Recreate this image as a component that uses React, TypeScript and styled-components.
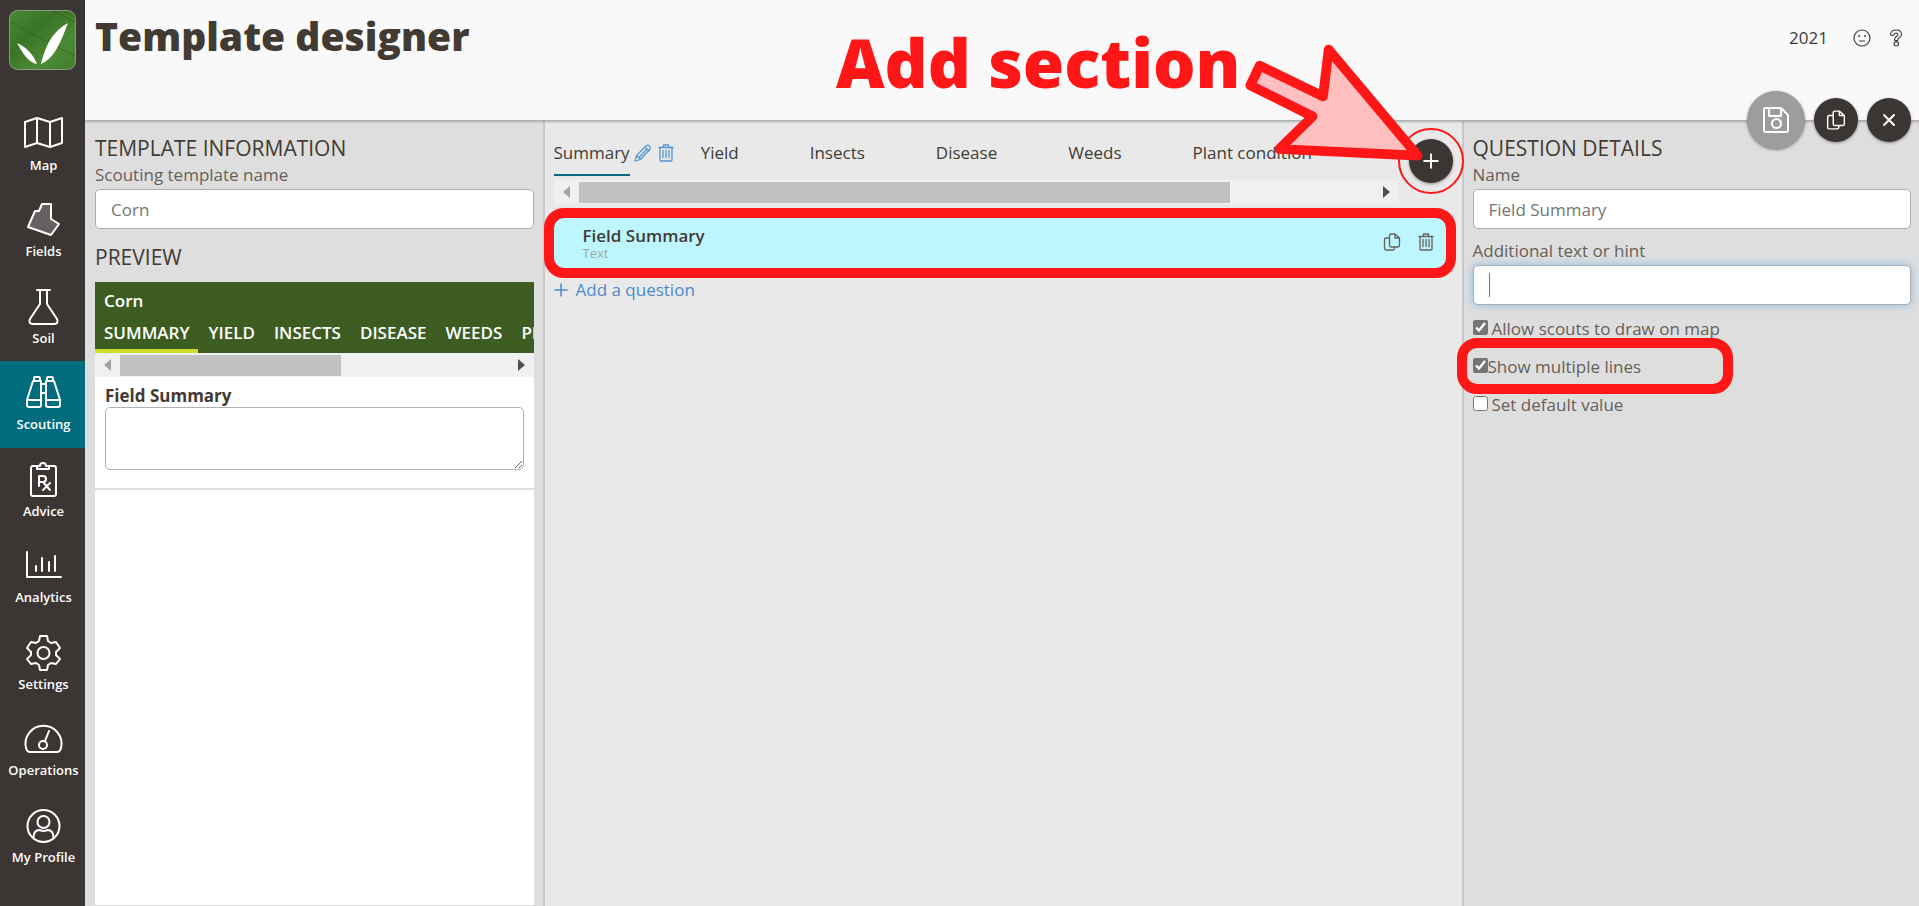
import React, { useId } from "react";
import styled, { createGlobalStyle, css } from "styled-components";

const GlobalStyle = createGlobalStyle`
  *, *::before, *::after { box-sizing: border-box; }
  body {
    margin: 0;
    font-family: "Open Sans", sans-serif;
    font-size: 17px;
    line-height: 24px;
    color: #413b34;
    background: #dedede;
  }
  button, input, textarea { font: inherit; color: inherit; }
  button { padding: 0; border: 0; background: none; cursor: pointer; }
  h1, h2, h3, p { margin: 0; }
`;

const RED = "#ff1616";

/* ---------- shell ---------- */

const Shell = styled.div`
  display: flex;
  min-height: 100vh;
`;

const Sidebar = styled.aside`
  flex: none;
  width: 85px;
  display: flex;
  flex-direction: column;
  background: #3b3634;
`;

const Brand = styled.a`
  display: block;
  margin: 10px 9px 32px;
  line-height: 0;
`;

const Nav = styled.nav`
  flex: 1;
  display: flex;
  flex-direction: column;
  padding-bottom: 26px;
`;

const NavLink = styled.a<{ $active?: boolean }>`
  flex: 1;
  display: flex;
  flex-direction: column;
  align-items: center;
  gap: 3px;
  padding: 12px 0 0 2px;
  color: #fff;
  font-size: 13px;
  font-weight: 600;
  line-height: 20px;
  text-decoration: none;
  background: ${(p) => (p.$active ? "#006c7d" : "transparent")};
`;

const Page = styled.div`
  flex: 1;
  min-width: 0;
  display: flex;
  flex-direction: column;
`;

const Header = styled.header`
  position: relative;
  z-index: 1;
  height: 121px;
  display: flex;
  justify-content: space-between;
  padding: 10px 14px 0 10px;
  background: #f9f9f9;
  border-bottom: 1px solid #b2b2b2;
  box-shadow: 0 1px 2px rgba(0, 0, 0, 0.25);
`;

const Title = styled.h1`
  font-size: 39px;
  font-weight: 800;
  line-height: 52px;
`;

const Account = styled.div`
  display: flex;
  align-items: center;
  height: 56px;
  gap: 25px;
`;

const HeaderIcons = styled.div`
  display: flex;
  gap: 16px;
`;

const IconButton = styled.button`
  display: flex;
`;

const FloatingActions = styled.div`
  position: absolute;
  right: 8px;
  bottom: -29px;
  display: flex;
  align-items: center;
  gap: 9px;
`;

const RoundButton = styled.button<{ $large?: boolean }>`
  display: flex;
  align-items: center;
  justify-content: center;
  width: ${(p) => (p.$large ? 58 : 44)}px;
  height: ${(p) => (p.$large ? 58 : 44)}px;
  border-radius: 50%;
  color: #fff;
  background: ${(p) => (p.$large ? "#9d9d9d" : "#3b3634")};
  box-shadow: 0 1px 3px rgba(0, 0, 0, 0.4);
`;

const Columns = styled.main`
  flex: 1;
  display: grid;
  grid-template-columns: minmax(0, 1fr) calc(50% + 2px) minmax(0, 1fr);
`;

const SidePanel = styled.section<{ $divided?: boolean }>`
  display: flex;
  flex-direction: column;
  padding: 12px ${(p) => (p.$divided ? 8 : 9)}px 0 ${(p) => (p.$divided ? 9 : 10)}px;
  border-left: ${(p) => (p.$divided ? "2px solid #c8c8c8" : "0")};
  background: #dedede;
`;

const PanelTitle = styled.h2`
  font-size: 21px;
  font-weight: 500;
  line-height: 30px;
  text-transform: uppercase;
`;

/* ---------- form parts ---------- */

const FieldBlock = styled.div`
  display: flex;
  flex-direction: column;
  gap: 2px;
  margin-bottom: 10px;
`;

const FieldLabel = styled.label`
  color: #66605a;
`;

const TextInput = styled.input<{ $focused?: boolean }>`
  width: 100%;
  height: 40px;
  padding: 0 15px;
  color: #757575;
  border: 1px solid #adadad;
  border-radius: 5px;
  outline: none;
  background: #fff;
  ${(p) =>
    p.$focused &&
    css`
      box-shadow: 0 0 8px rgba(102, 175, 233, 0.7);
      background: linear-gradient(#777, #777) 15px 50% / 1px 24px no-repeat #fff;
    `}
`;

const Options = styled.div`
  display: flex;
  flex-direction: column;
  align-items: flex-start;
  gap: 12px;
  padding-top: 1px;
`;

const Option = styled.label<{ $tight?: boolean }>`
  position: relative;
  display: flex;
  align-items: flex-start;
  gap: ${(p) => (p.$tight ? 0 : 4)}px;
  line-height: 26px;
  color: #66605a;
`;

const Checkbox = styled.input`
  width: 15px;
  height: 15px;
  margin: 4px 0 0;
  accent-color: #757575;
`;

const Highlight = styled.span<{ $inset: string }>`
  position: absolute;
  inset: ${(p) => p.$inset};
  border: 10px solid ${RED};
  border-radius: 20px;
  pointer-events: none;
`;

/* ---------- scroll bar ---------- */

const Track = styled.div`
  display: flex;
  align-items: center;
  height: 24px;
  padding: 0 9px;
  background: #f0f0f0;
`;

const Rail = styled.div`
  flex: 1;
  height: 21px;
  margin: 0 9px;
`;

const Thumb = styled.div`
  height: 100%;
  background: #c1c1c1;
`;

function ScrollBar({ share }: { share: number }) {
  return (
    <Track aria-hidden="true">
      <svg width="7" height="12" viewBox="0 0 7 12"><path d="M7 0v12L0 6z" fill="#a3a3a3" /></svg>
      <Rail>
        <Thumb style={{ width: `${share}%` }} />
      </Rail>
      <svg width="7" height="12" viewBox="0 0 7 12"><path d="M0 0v12l7-6z" fill="#505050" /></svg>
    </Track>
  );
}

/* ---------- preview ---------- */

const PreviewBlock = styled.div`
  flex: 1;
  display: flex;
  flex-direction: column;
  gap: 10px;
  padding: 3px 0 1px;
`;

const Preview = styled.div`
  flex: 1;
  background: #fff;
`;

const PreviewHead = styled.div`
  padding-top: 6px;
  color: #fff;
  font-weight: 600;
  background: #3d5c22;
`;

const PreviewName = styled.p`
  padding: 0 9px;
  line-height: 26px;
`;

const PreviewTabs = styled.div`
  display: flex;
  gap: 1px;
  overflow: hidden;
`;

const PreviewTab = styled.button<{ $active?: boolean }>`
  flex: none;
  padding: 6px 9px 3px;
  line-height: 26px;
  font-weight: 600;
  text-transform: uppercase;
  white-space: nowrap;
  color: #fff;
  border-bottom: 4px solid ${(p) => (p.$active ? "#cddc29" : "transparent")};
`;

const PreviewQuestion = styled.div`
  display: flex;
  flex-direction: column;
  padding: 8px 10px 18px;
  border-bottom: 2px solid #dedede;
`;

const PreviewLabel = styled.label`
  font-weight: 700;
  line-height: 22px;
`;

const PreviewAnswer = styled.textarea`
  display: block;
  height: 63px;
  border: 1px solid #b0b0b0;
  border-radius: 5px;
  resize: vertical;
  outline: none;
`;

/* ---------- section editor ---------- */

const Editor = styled.section`
  padding: 0 9px;
  border-left: 2px solid #c8c8c8;
  background: #e9e9e9;
`;

const SectionBar = styled.div`
  display: flex;
  align-items: flex-start;
  justify-content: space-between;
  gap: 10px;
`;

const SectionScroller = styled.div`
  flex: 1;
  min-width: 0;
  padding-top: 14px;
`;

const Sections = styled.div`
  display: flex;
  gap: 27px;
  margin: 0 10px 4px 0;
  overflow: hidden;
`;

const Section = styled.div`
  flex: none;
  display: flex;
  align-items: flex-start;
`;

const SectionName = styled.button<{ $active?: boolean }>`
  padding: 5px 0 8px;
  font-weight: 500;
  line-height: 26px;
  white-space: nowrap;
  border-bottom: 2px solid ${(p) => (p.$active ? "#006c7d" : "transparent")};
`;

const SectionTools = styled.div<{ $hidden?: boolean }>`
  display: flex;
  gap: 6px;
  width: 44px;
  padding: 9px 0 0 4px;
  color: #5294cf;
  visibility: ${(p) => (p.$hidden ? "hidden" : "visible")};
`;

const AddSection = styled.div`
  position: relative;
  flex: none;
  margin-top: 18px;
`;

const Ring = styled.span`
  position: absolute;
  inset: -11px;
  border: 2px solid ${RED};
  border-radius: 50%;
  pointer-events: none;
`;

const Callout = styled.p`
  position: absolute;
  z-index: 2;
  right: 212px;
  top: -122px;
  font-size: 67px;
  font-weight: 800;
  line-height: 90px;
  white-space: nowrap;
  color: ${RED};
  pointer-events: none;
`;

const Arrow = styled.svg`
  position: absolute;
  z-index: 2;
  left: -166px;
  top: -97px;
  pointer-events: none;
`;

const Question = styled.article`
  position: relative;
  display: flex;
  align-items: center;
  justify-content: space-between;
  height: 56px;
  margin-top: 10px;
  padding: 0 19px 0 29px;
  background: #bdf6ff;
  box-shadow: 0 1px 2px rgba(0, 0, 0, 0.3);
`;

const QuestionName = styled.h3`
  font-size: 17px;
  font-weight: 600;
  line-height: 22px;
`;

const QuestionType = styled.p`
  font-size: 13px;
  line-height: 12px;
  color: #9fa8a8;
`;

const QuestionTools = styled.div`
  display: flex;
  gap: 17px;
  color: #66605a;
`;

const AddQuestion = styled.button`
  display: flex;
  align-items: center;
  gap: 8px;
  margin-top: 7px;
  line-height: 26px;
  color: #4a8bc9;
`;

/* ---------- icons ---------- */

const stroke = {
  fill: "none",
  stroke: "currentColor",
  strokeLinecap: "round" as const,
  strokeLinejoin: "round" as const,
};

const Logo = () => (
  <svg width="67" height="60" viewBox="0 0 67 60" role="img" aria-label="Home">
    <defs>
      <linearGradient id="field" x1="0" y1="0" x2="1" y2="1">
        <stop offset="0" stopColor="#4a8a35" />
        <stop offset="0.35" stopColor="#3b7428" />
        <stop offset="0.7" stopColor="#4b8a33" />
        <stop offset="1" stopColor="#427a2c" />
      </linearGradient>
    </defs>
    <rect x="0.5" y="0.5" width="66" height="59" rx="8" fill="url(#field)" stroke="#8b9a86" />
    <path d="M44 1l22 11M54 1l12 6M1 12l65 34" stroke="#2c5a1c" strokeWidth="1" opacity="0.6" fill="none" />
    <path d="M8 33C17 37 24 44 28 54C20 53 14 44 8 33Z" fill="#fff" />
    <path d="M59 13C43 22 37 35 32 54C46 48 52 31 59 13Z" fill="#fff" />
  </svg>
);

function NavIcon({ children }: { children: React.ReactNode }) {
  return (
    <svg width="44" height="38" viewBox="0 0 44 38" {...stroke} strokeWidth="2">
      {children}
    </svg>
  );
}

const navItems: { label: string; icon: React.ReactNode; active?: boolean }[] = [
  { label: "Map", icon: <path d="M3 8l12-4 13 4 12-4v25l-12 4-13-4-12 4zM15 4v25M28 8v25" /> },
  { label: "Fields", icon: <path d="M20 4h9v15l8 5-8 11-23-8 7-16h4z" fill="#646160" /> },
  { label: "Soil", icon: <path d="M15 3h13M18 3v14L8 32q-2 5 3 5h21q5 0 3-5L25 17V3" /> },
  {
    label: "Scouting",
    active: true,
    icon: (
      <path d="M11 8L5 27v5q0 2 2 2h10q2 0 2-2V8zM32 8l6 19v5q0 2-2 2H26q-2 0-2-2V8zM12 8V6q0-2 1-2h4q1 0 1 2v2M25 8V6q0-2 1-2h4q1 0 1 2v2M5 27h14M24 27h14M19 11h5M19 20h5" />
    ),
  },
  {
    label: "Advice",
    icon: (
      <>
        <path d="M16 6h-5q-2 0-2 2v26q0 2 2 2h21q2 0 2-2V8q0-2-2-2h-5M15 9V6h3q0-3 3-3t3 3h3v3z" />
        <path d="M17 26V16h4q3 0 3 3t-3 3h-4M21 22l7 8M28 23l-7 7" />
      </>
    ),
  },
  { label: "Analytics", icon: <path d="M5 6v25h34M14 20v5M20 12v13M27 16v9M33 10v15" /> },
  {
    label: "Settings",
    icon: (
      <>
        <path d="M18 3h7l1 5 3 2 5-1 4 6-4 4v3l4 4-4 5-5-1-3 2-1 5h-7l-1-5-3-2-5 1-4-5 4-4v-3l-4-4 4-6 5 1 3-2z" />
        <circle cx="21.500" cy="20" r="6" />
      </>
    ),
  },
  {
    label: "Operations",
    icon: (
      <>
        <path d="M8 33h27q3 0 4-4a18 18 0 1 0-35 0q1 4 4 4z" />
        <circle cx="21" cy="26" r="4" />
        <path d="M23 22l4-10" />
      </>
    ),
  },
  {
    label: "My Profile",
    icon: (
      <>
        <circle cx="21.500" cy="20" r="16" />
        <circle cx="21.500" cy="16" r="6" />
        <path d="M11.500 32q0-8 6-8 4 2 8 0 6 0 6 8" />
      </>
    ),
  },
];

const CopyIcon = ({ size = 18 }: { size?: number }) => (
  <svg width={size} height={size} viewBox="0 0 18 18" {...stroke} strokeWidth="1.300">
    <path d="M12 1H8Q6.500 1 6.500 2.500v10Q6.500 14 8 14h7q1.500 0 1.500-1.500V5zM12 1v4h4.500M6.500 5H3Q1.500 5 1.500 6.500v9Q1.500 17 3 17h7q1.500 0 1.500-1.500V14" />
  </svg>
);

const TrashIcon = () => (
  <svg width="16" height="18" viewBox="0 0 16 18" {...stroke} strokeWidth="1.300">
    <path d="M1 3.500h14M5.500 3V1h5v2M2 3.500V16q0 1 1 1h10q1 0 1-1V3.500M5 6.500v7M8 6.500v7M11 6.500v7" />
  </svg>
);

const PencilIcon = () => (
  <svg width="18" height="18" viewBox="0 0 18 18" {...stroke} strokeWidth="1.200">
    <path d="M1 17l1.500-5.500L12.500 1.500q1.500-1 3 .5t.5 3L6.500 15.500zM2.500 11.500l4 4M11 3l4 4M5 13.500L13 5" />
  </svg>
);

const SaveIcon = () => (
  <svg width="28" height="28" viewBox="0 0 28 28" {...stroke} strokeWidth="2">
    <path d="M3 2h16l7 7v15q0 2-2 2H4q-2 0-2-2V3.500Q2 2 3 2zM7 2v8h12V2" />
    <circle cx="14.500" cy="17.500" r="4.500" />
  </svg>
);

const CloseIcon = () => (
  <svg width="14" height="14" viewBox="0 0 14 14" {...stroke} strokeWidth="2">
    <path d="M2 2l10 10M12 2L2 12" />
  </svg>
);

const PlusIcon = ({ size, weight }: { size: number; weight: number }) => (
  <svg width={size} height={size} viewBox="0 0 14 14" {...stroke} strokeWidth={weight}>
    <path d="M7 1v12M1 7h12" />
  </svg>
);

const FaceIcon = () => (
  <svg width="18" height="18" viewBox="0 0 18 18" {...stroke} strokeWidth="1.200">
    <circle cx="9" cy="9" r="8" />
    <path d="M6.500 12h5" />
    <path d="M6 7h.1M12 7h.1" strokeWidth="1.800" />
  </svg>
);

const HelpIcon = () => (
  <svg width="18" height="18" viewBox="0 0 18 18" {...stroke} strokeWidth="1.100">
    <path d="M3.500 5.500C3.500 2.500 6 1 9 1s5.500 1.500 5.500 4.300c0 3.200-3.500 3-3.500 5.200q0 1-1 1H8.500q-1 0-1-1c0-3 3.500-3 3.500-5 0-2-3.500-2-4 0q-.5 1-1.700 1t-1.800-1z" />
    <circle cx="9.300" cy="14.800" r="2.200" />
  </svg>
);

/* ---------- page ---------- */

const sections = ["Summary", "Yield", "Insects", "Disease", "Weeds", "Plant condition", "Soil condition"];

function TextField({ label, value, focused }: { label: string; value: string; focused?: boolean }) {
  const id = useId();
  return (
    <FieldBlock>
      <FieldLabel htmlFor={id}>{label}</FieldLabel>
      <TextInput id={id} type="text" defaultValue={value} $focused={focused} />
    </FieldBlock>
  );
}

export default function App() {
  return (
    <>
      <GlobalStyle />
      <Shell>
        <Sidebar>
          <Brand href="#home"><Logo /></Brand>
          <Nav>
            {navItems.map((item) => (
              <NavLink key={item.label} href="#" $active={item.active}>
                <NavIcon>{item.icon}</NavIcon>
                {item.label}
              </NavLink>
            ))}
          </Nav>
        </Sidebar>

        <Page>
          <Header>
            <Title>Template designer</Title>
            <Account>
              <span>2021</span>
              <HeaderIcons>
                <IconButton aria-label="Feedback"><FaceIcon /></IconButton>
                <IconButton aria-label="Help"><HelpIcon /></IconButton>
              </HeaderIcons>
            </Account>
            <FloatingActions>
              <RoundButton $large aria-label="Save"><SaveIcon /></RoundButton>
              <RoundButton aria-label="Copy"><CopyIcon size={20} /></RoundButton>
              <RoundButton aria-label="Close"><CloseIcon /></RoundButton>
            </FloatingActions>
          </Header>

          <Columns>
            <SidePanel>
              <PanelTitle>Template information</PanelTitle>
              <TextField label="Scouting template name" value="Corn" />
              <PreviewBlock>
                <PanelTitle>Preview</PanelTitle>
                <Preview>
                  <PreviewHead>
                    <PreviewName>Corn</PreviewName>
                    <PreviewTabs>
                      {sections.map((name, i) => (
                        <PreviewTab key={name} $active={i === 0}>{name}</PreviewTab>
                      ))}
                    </PreviewTabs>
                  </PreviewHead>
                  <ScrollBar share={57} />
                  <PreviewQuestion>
                    <PreviewLabel htmlFor="answer">Field Summary</PreviewLabel>
                    <PreviewAnswer id="answer" />
                  </PreviewQuestion>
                </Preview>
              </PreviewBlock>
            </SidePanel>

            <Editor>
              <SectionBar>
                <SectionScroller>
                  <Sections>
                    {sections.map((name, i) => (
                      <Section key={name}>
                        <SectionName $active={i === 0}>{name}</SectionName>
                        <SectionTools $hidden={i !== 0}>
                          <IconButton aria-label={`Rename ${name}`}><PencilIcon /></IconButton>
                          <IconButton aria-label={`Delete ${name}`}><TrashIcon /></IconButton>
                        </SectionTools>
                      </Section>
                    ))}
                  </Sections>
                  <ScrollBar share={82} />
                </SectionScroller>
                <AddSection>
                  <RoundButton aria-label="Add section"><PlusIcon size={16} weight={1.6} /></RoundButton>
                  <Ring />
                  <Callout>Add section</Callout>
                  <Arrow width="182" height="120" viewBox="310 65 546 360" aria-hidden="true">
                    <path
                      d="M360 136L550 228L567 88L834 406L419 386L519 288L332 195Z"
                      fill="#ffbfbf"
                      stroke={RED}
                      strokeWidth="29"
                      strokeLinejoin="round"
                    />
                  </Arrow>
                </AddSection>
              </SectionBar>

              <Question>
                <div>
                  <QuestionName>Field Summary</QuestionName>
                  <QuestionType>Text</QuestionType>
                </div>
                <QuestionTools>
                  <IconButton aria-label="Copy question"><CopyIcon /></IconButton>
                  <IconButton aria-label="Delete question"><TrashIcon /></IconButton>
                </QuestionTools>
                <Highlight $inset="-6px -3px -8px -10px" />
              </Question>
              <AddQuestion>
                <PlusIcon size={14} weight={1.5} />
                Add a question
              </AddQuestion>
            </Editor>

            <SidePanel $divided>
              <PanelTitle>Question details</PanelTitle>
              <TextField label="Name" value="Field Summary" />
              <TextField label="Additional text or hint" value="" focused />
              <Options>
                <Option>
                  <Checkbox type="checkbox" defaultChecked />
                  Allow scouts to draw on map
                </Option>
                <Option $tight>
                  <Checkbox type="checkbox" defaultChecked />
                  Show multiple lines
                  <Highlight $inset="-16px -92px -14px -16px" />
                </Option>
                <Option>
                  <Checkbox type="checkbox" />
                  Set default value
                </Option>
              </Options>
            </SidePanel>
          </Columns>
        </Page>
      </Shell>
    </>
  );
}
